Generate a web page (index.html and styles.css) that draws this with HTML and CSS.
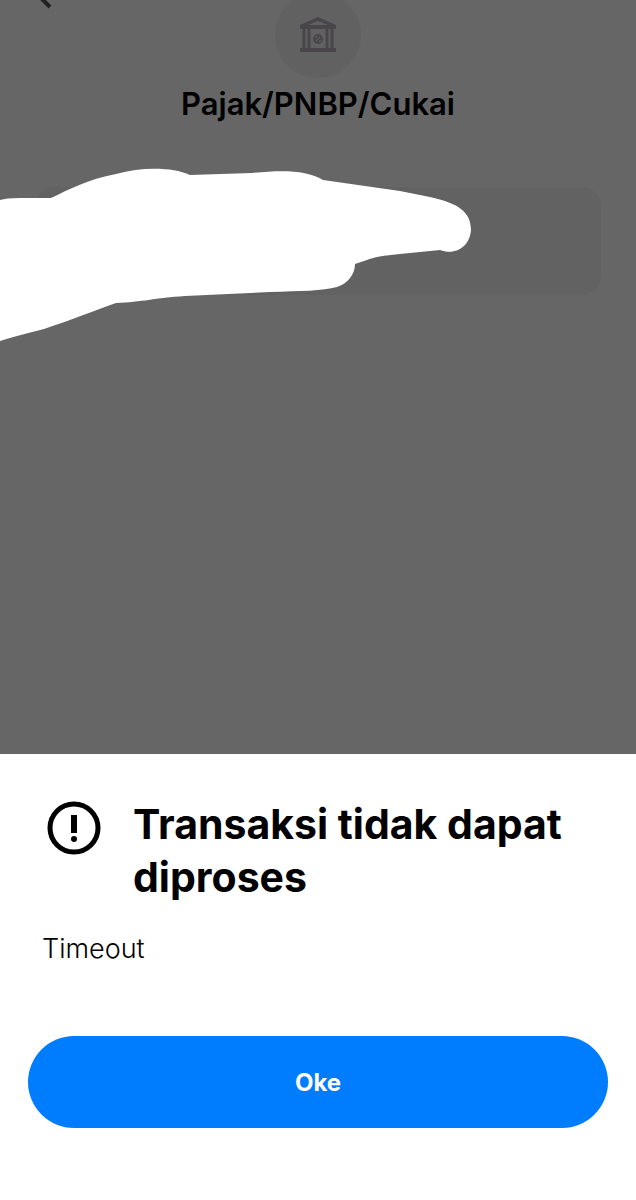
FILE: index.html
```html
<!DOCTYPE html>
<html lang="id">
<head>
    <meta charset="UTF-8">
    <meta name="viewport" content="width=device-width, initial-scale=1.0">
    <title>Pajak/PNBP/Cukai</title>
    <link rel="stylesheet" href="styles.css">
</head>
<body>

<main class="page">
    <header class="header">
        <button class="back" type="button" aria-label="Kembali">
            <svg width="20" height="36" viewBox="0 0 20 36">
                <path d="M14 -14 L0 0 L15 15"/>
            </svg>
        </button>
        <div class="category-icon">
            <svg width="36" height="36" viewBox="0 0 36 36">
                <path class="bar" fill-rule="evenodd" d="M0 8 L18 0 L36 8 V12 H0 Z M8 8 H28 L18 4 Z"/>
                <path class="bar" d="M0 31 H36 V35 H0 Z"/>
                <path class="line" d="M4 11 V32 M9 11 V32 M27 11 V32 M32 11 V32"/>
                <circle class="coin" cx="18" cy="22" r="5"/>
                <path class="percent" d="M16 24 L20 20 M15 20 h2 M19 24 h2"/>
            </svg>
        </div>
    </header>
    <h1 class="page-title">Pajak/PNBP/Cukai</h1>
    <div class="card"></div>
    <!-- coretan penutup data -->
    <svg class="scribble" width="472" height="174" viewBox="0 168 472 174" aria-hidden="true">
        <path d="M0 200 Q6 198 20 198 L51 198 C68 190 88 179 116 174 C142 167 172 167 190 175 L252 173 C282 170 307 170 323 180 L400 191 L430 197 C458 203 471 212 471 230 C470 246 456 256 440 250 L400 254 Q376 256 367 260 L355 264 C355 275 347 284 337 287 C323 291 300 291 270 292 L185 296 C155 298 142 302 116 303 C96 310 71 320 44 329 Q12 337 0 341 Z"/>
    </svg>
</main>

<section class="sheet" role="dialog" aria-labelledby="sheet-title">
    <div class="sheet-head">
        <svg class="alert" width="54" height="54" viewBox="0 0 54 54">
            <circle class="ring" cx="27" cy="27" r="24"/>
            <rect x="24" y="14" width="6" height="18"/>
            <circle cx="27" cy="38" r="3"/>
        </svg>
        <h2 class="sheet-title" id="sheet-title">Transaksi tidak dapat diproses</h2>
    </div>
    <p class="message">Timeout</p>
    <button class="ok" type="button">Oke</button>
</section>

</body>
</html>
```
FILE: styles.css
```css
* {
    box-sizing: border-box;
}
body {
    margin: 0;
    min-height: 100vh;
    display: flex;
    flex-direction: column;
    font-family: Inter, "Liberation Sans", sans-serif;
    background-color: #666;
    color: #000;
}
.page {
    position: relative;
    flex: 1;
    overflow: hidden;
}
.header {
    display: grid;
    grid-template-columns: 1fr auto 1fr;
    align-items: start;
    margin-top: -8px;
    padding: 0 35px;
}
.back {
    width: 20px;
    height: 36px;
    padding: 0;
    border: none;
    background: none;
    cursor: pointer;
}
.back path {
    fill: none;
    stroke: #222;
    stroke-width: 4;
}
.category-icon {
    width: 86px;
    height: 86px;
    display: flex;
    align-items: center;
    justify-content: center;
    border-radius: 50%;
    background-color: #616161;
}
.category-icon .line {
    fill: none;
    stroke: #48464a;
    stroke-width: 3;
}
.category-icon .bar,
.category-icon .coin {
    fill: #48464a;
}
.category-icon .percent {
    stroke: #666;
    stroke-width: 1;
}
.page-title {
    margin: 8px 0 65px;
    font-size: 31px;
    line-height: 36px;
    font-weight: 600;
    text-align: center;
}
.card {
    height: 108px;
    margin: 0 35px;
    border-radius: 20px;
    background-color: #626262;
}
.scribble {
    position: absolute;
    top: 168px;
    left: 0;
    fill: #fff;
}
.sheet {
    padding: 44px 28px 72px;
    background-color: #fff;
}
.sheet-head {
    display: flex;
    align-items: flex-start;
    gap: 32px;
    padding: 0 19px;
}
.alert {
    flex: none;
    margin-top: 3px;
}
.alert .ring {
    fill: none;
    stroke: #000;
    stroke-width: 5;
}
.sheet-title {
    margin: 0;
    font-size: 41px;
    line-height: 53px;
    font-weight: 700;
}
.message {
    margin: 25px 14px 67px;
    font-size: 27px;
    line-height: 40px;
    font-weight: 300;
}
.ok {
    display: block;
    width: 100%;
    height: 92px;
    border: none;
    border-radius: 46px;
    background-color: #007dff;
    color: #fff;
    font-family: inherit;
    font-size: 24px;
    font-weight: 700;
    cursor: pointer;
}
.ok:hover {
    background-color: #006fe6;
}
```
